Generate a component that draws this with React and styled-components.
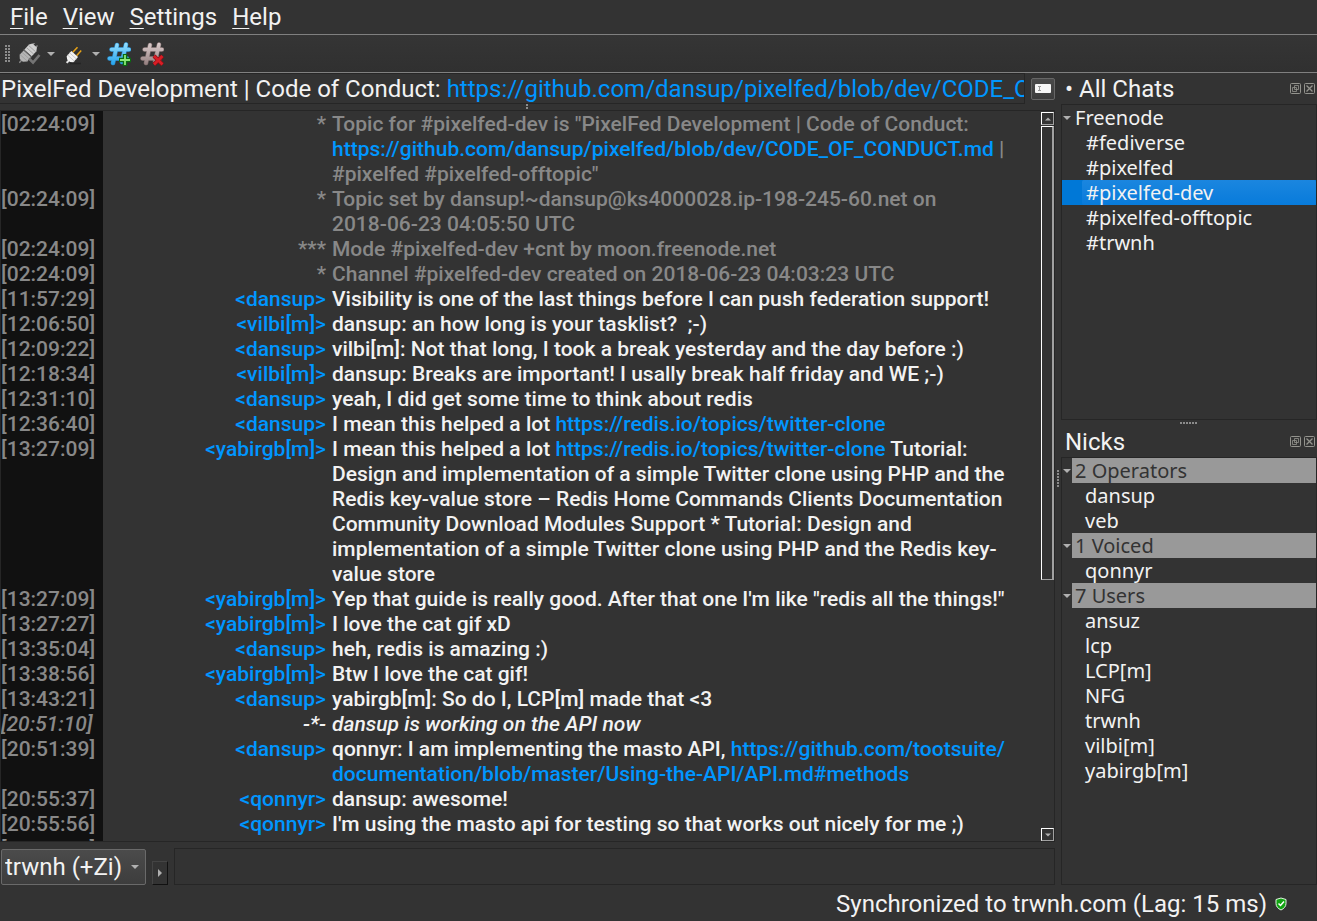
import React from "react";
import styled, { createGlobalStyle, css } from "styled-components";

const color = {
  window: "#333333",
  frame: "#262626",
  text: "#f2f2f2",
  muted: "#888888",
  link: "#0096ff",
  gutter: "#111111",
};

const GlobalStyle = createGlobalStyle`
  * { box-sizing: border-box; }
  html, body { margin: 0; padding: 0; }
  body {
    background: ${color.window};
    color: ${color.text};
    font-family: Roboto, "Liberation Sans", sans-serif;
    font-size: 24px;
    line-height: 30px;
  }
  button, input, select { font: inherit; color: inherit; margin: 0; }
`;

const Window = styled.div`
  display: flex;
  flex-direction: column;
  height: 100vh;
  overflow: hidden;
`;

const MenuBar = styled.nav`
  display: flex;
  gap: 15px;
  height: 35px;
  padding: 2px 10px 0;
  border-bottom: 1px solid #808080;
  flex: none;
`;

const MenuButton = styled.button`
  background: none;
  border: 0;
  padding: 0;
  height: 30px;
  u {
    text-decoration-thickness: 1px;
    text-underline-offset: 3px;
  }
`;

const Toolbar = styled.div`
  display: flex;
  align-items: center;
  height: 38px;
  padding-left: 5px;
  border-bottom: 1px solid #808080;
  background: linear-gradient(#353535, #303030);
  flex: none;
`;

const ToolButton = styled.button`
  display: flex;
  align-items: center;
  background: none;
  border: 0;
  padding: 0;
  margin-left: ${(p) => p.$before}px;
`;

const Main = styled.main`
  display: flex;
  flex: 1;
  min-height: 0;
`;

const ChatColumn = styled.section`
  display: flex;
  flex-direction: column;
  flex: 1;
  min-width: 0;
`;

const TopicRow = styled.div`
  display: flex;
  align-items: center;
  gap: 6px;
  height: 31px;
  flex: none;
`;

const Topic = styled.div`
  flex: 1;
  min-width: 0;
  height: 31px;
  padding: 1px 0 0 1px;
  overflow: hidden;
  white-space: nowrap;
  border: 1px solid ${color.frame};
  border-left: 0;
  line-height: 29px;
`;

const EditButton = styled.button`
  display: flex;
  align-items: center;
  justify-content: center;
  width: 24px;
  height: 22px;
  padding: 0;
  border: 1px solid #666;
  border-radius: 2px;
  background: linear-gradient(#4a4a4a, #3c3c3c);
`;

const Handle = styled.div`
  display: flex;
  align-items: center;
  justify-content: center;
  flex: none;
  ${(p) => (p.$vertical ? "width: 6px;" : "height: 6px;")}
`;

const Link = styled.a`
  color: ${color.link};
  text-decoration: none;
`;

const NoBreak = styled.span`
  white-space: nowrap;
`;

const ChatFrame = styled.div`
  display: flex;
  flex: 1;
  min-height: 0;
  border: 1px solid ${color.frame};
`;

const Log = styled.div`
  flex: 1;
  min-width: 0;
  padding-top: 1px;
  overflow: hidden;
  background: linear-gradient(to right, ${color.gutter} 102px, transparent 102px);
  font-size: 21px;
  font-weight: 500;
  line-height: 25px;
`;

const Line = styled.div`
  display: grid;
  grid-template-columns: 102px 223px minmax(0, 1fr);
  ${(p) => p.$kind === "info" && css`color: ${color.muted};`}
  ${(p) => p.$kind === "action" && css`font-style: italic;`}
`;

const Time = styled.time`
  color: ${color.muted};
`;

const Sender = styled.span`
  text-align: right;
  color: ${(p) => (p.$nick ? color.link : "inherit")};
`;

const Message = styled.span`
  padding: 0 17px 0 6px;
`;

const Scrollbar = styled.div`
  display: flex;
  flex-direction: column;
  width: 13px;
  flex: none;
  padding-top: 1px;
`;

const raised = css`
  border: 1px solid;
  border-color: #ffffff #a0a0a0 #a0a0a0 #ffffff;
`;

const ScrollButton = styled.button`
  ${raised}
  display: flex;
  align-items: center;
  justify-content: center;
  width: 13px;
  height: 13px;
  padding: 0;
  background: ${color.window};
  flex: none;
`;

const ScrollTrack = styled.div`
  display: flex;
  flex-direction: column;
  flex: 1;
  padding-top: 1px;
`;

const ScrollThumb = styled.div`
  ${raised}
  border-right-width: 2px;
  width: 13px;
  flex: 129 1 0;
`;

const ScrollRest = styled.div`
  flex: 71 1 0;
`;

const InputRow = styled.form`
  display: flex;
  align-items: flex-end;
  gap: 6px;
  height: 37px;
  margin-top: 6px;
  flex: none;
`;

const SelectBox = styled.label`
  display: grid;
  align-items: center;
  width: 146px;
  height: 36px;
  padding-left: 1px;
  > * { grid-area: 1 / 1; }
  > svg {
    justify-self: end;
    margin-right: 7px;
    pointer-events: none;
  }
`;

const NickSelect = styled.select`
  appearance: none;
  width: 100%;
  height: 36px;
  padding: 0 0 0 3px;
  border: 1px solid #6a6a6a;
  border-radius: 2px;
  background: linear-gradient(#4b4b4b, #3d3d3d);
`;

const StyleButton = styled.button`
  display: flex;
  align-items: center;
  justify-content: center;
  width: 16px;
  height: 24px;
  padding: 0;
  border: 1px solid;
  border-color: #444 #111 #111 #444;
  background: ${color.window};
`;

const MessageInput = styled.input`
  flex: 1;
  min-width: 0;
  height: 37px;
  padding: 0 4px;
  border: 1px solid ${color.frame};
  background: ${color.window};
  outline: 0;
`;

const Sidebar = styled.aside`
  display: flex;
  flex-direction: column;
  width: 256px;
  flex: none;
`;

const Dock = styled.section`
  display: flex;
  flex-direction: column;
  min-height: 0;
  flex: ${(p) => p.$grow} 1 0;
`;

const DockTitle = styled.header`
  display: flex;
  align-items: center;
  gap: 3px;
  height: 31px;
  padding: 0 2px 0 4px;
  flex: none;
`;

const Title = styled.h2`
  flex: 1;
  margin: 0;
  font-size: 24px;
  font-weight: 400;
`;

const DockButton = styled.button`
  display: flex;
  width: 11px;
  height: 11px;
  padding: 0;
  border: 0;
  background: none;
`;

const Tree = styled.ul`
  flex: 1;
  min-height: 0;
  margin: 0;
  padding: 0;
  list-style: none;
  overflow: hidden;
  border: 1px solid ${color.frame};
  font-family: "Noto Sans", "Open Sans", sans-serif;
  font-size: 20px;
  line-height: 26px;
`;

const Group = styled.li`
  display: flex;
  align-items: center;
  gap: 1px;
  height: 25px;
  padding-left: 1px;
`;

const GroupLabel = styled.span`
  flex: 1;
  height: 25px;
  padding-left: 3px;
  ${(p) => p.$filled && css`
    background: #999999;
    color: ${color.window};
  `}
`;

const Item = styled.li`
  height: 25px;
  padding-left: 20px;
  background: ${(p) => (p.$selected ? "#0078d7" : "transparent")};
`;

const ItemLabel = styled.span`
  display: block;
  height: 25px;
  padding-left: ${(p) => p.$inset}px;
  border-radius: 2px;
  background: ${(p) => (p.$selected ? "linear-gradient(#1b86df, #087bdb)" : "none")};
`;

const StatusBar = styled.footer`
  display: flex;
  align-items: center;
  justify-content: flex-end;
  gap: 8px;
  height: 36px;
  padding: 2px 30px 0 0;
  flex: none;
`;

const Arrow = ({ dir = "down", size = 8 }) => {
  const d = { down: "M0 2h8L4 6z", up: "M0 6h8L4 2z", right: "M2 0v8L6 4z" }[dir];
  return (
    <svg width={size} height={size} viewBox="0 0 8 8" aria-hidden="true">
      <path d={d} fill="#b0b0b0" />
    </svg>
  );
};

const Dots = ({ cols, rows, step = 3 }) => (
  <svg width={cols * step} height={rows * step} aria-hidden="true">
    {Array.from({ length: cols * rows }, (_, i) => (
      <rect key={i} x={(i % cols) * step} y={Math.floor(i / cols) * step} width="2" height="2" fill="#8c8c8c" />
    ))}
  </svg>
);

const DisconnectedIcon = () => (
  <svg width="22" height="22" viewBox="0 0 22 22" aria-hidden="true">
    <g transform="translate(9 10) rotate(-48)">
      <path d="M-13 0h4M9-2h4M9 2h3" stroke="#8a8a8a" strokeWidth="1.4" />
      <path d="M-10-2l3-3h6v10h-6l-3-3z" fill="#b5b5b5" />
      <path d="M0-5h7l3 2v6l-3 2H0z" fill="#d0d0d0" />
      <path d="M-6.500-5v10M-3.500-5v10M3-5v10M6-5v10" stroke="#9c9c9c" strokeWidth=".8" />
      <path d="M-.5-5.500v11" stroke="#6b6b6b" />
    </g>
    <path d="M10 15.500l4 4 6.500-7.500" stroke="#747474" strokeWidth="2.600" fill="none" />
  </svg>
);

const PlugIcon = () => (
  <svg width="18" height="22" viewBox="0 0 18 22" aria-hidden="true">
    <path d="M5 20.500h11" stroke="#252525" strokeWidth="1.500" />
    <g transform="translate(7 14) rotate(-48)">
      <path d="M4-2.500h7M4 2.500h7" stroke="#e8a317" strokeWidth="1.500" />
      <path d="M-8 0h4" stroke="#e2e2e2" strokeWidth="2" />
      <path d="M-5-2l2-2.500h7v9h-7L-5 2z" fill="#f4f4f4" />
      <path d="M-1.500-4.500v9M1.500-4.500v9" stroke="#c4c4c4" strokeWidth=".8" />
    </g>
  </svg>
);

const hashPath = "M10 3L6 21M19 2.500l-4 17.500M4.500 7.500h17.500M2.500 16.500h17.500";

const HashIcon = ({ id, from, to, edge, children }) => (
  <svg width="24" height="24" viewBox="0 0 24 24" aria-hidden="true">
    <defs>
      <linearGradient id={id} x1="0" y1="0" x2="0" y2="24" gradientUnits="userSpaceOnUse">
        <stop offset="0" stopColor={from} />
        <stop offset="1" stopColor={to} />
      </linearGradient>
    </defs>
    <path d={hashPath} stroke={edge} strokeWidth="4.600" strokeLinecap="round" fill="none" />
    <path d={hashPath} stroke={`url(#${id})`} strokeWidth="3.400" strokeLinecap="round" fill="none" />
    {children}
  </svg>
);

const JoinIcon = () => (
  <HashIcon id="join" from="#9be2ff" to="#1d9feb" edge="#2a8fd0">
    <path d="M18 12v12M12 18h12" stroke="#0a6a10" strokeWidth="4.400" />
    <path d="M18 13v10M13 18h10" stroke="#8be878" strokeWidth="1.800" />
  </HashIcon>
);

const PartIcon = () => (
  <HashIcon id="part" from="#e0d2d2" to="#8f7a7a" edge="#7c6a6a">
    <path d="M14 14l8.500 8.500M22.500 14L14 22.500" stroke="#8f0b10" strokeWidth="4" />
    <path d="M14 14l8.500 8.500M22.500 14L14 22.500" stroke="#d81e26" strokeWidth="2.600" />
  </HashIcon>
);

const EditIcon = () => (
  <svg width="16" height="10" viewBox="0 0 16 10" aria-hidden="true">
    <rect x="0" y="0" width="16" height="9" rx="1" fill="#f6f6f6" />
    <path d="M3 2.5h3M3 6.5h3M4.5 2.5v4" stroke="#999" fill="none" />
  </svg>
);

const FloatIcon = () => (
  <svg width="11" height="11" viewBox="0 0 11 11" fill="none" stroke="#94948e" aria-hidden="true">
    <rect x=".5" y=".5" width="10" height="10" rx="1" />
    <path d="M4.500 2.500h4v4h-4zM2.500 4.500h4v4h-4z" strokeWidth=".8" />
  </svg>
);

const CloseIcon = () => (
  <svg width="11" height="11" viewBox="0 0 11 11" fill="none" stroke="#94948e" aria-hidden="true">
    <rect x=".5" y=".5" width="10" height="10" rx="1" />
    <path d="M2.500 2.500l6 6M8.500 2.500l-6 6" strokeWidth="1.300" />
  </svg>
);

const ShieldIcon = () => (
  <svg width="12" height="14" viewBox="0 0 12 14" aria-hidden="true">
    <path d="M6 1l5 1.500v4c0 3-2 5-5 6.500-3-1.500-5-3.500-5-6.500v-4z" fill="#12a312" stroke="#dff5df" />
    <path d="M3.500 6.500l2 2 3.500-4" stroke="#fff" strokeWidth="1.500" fill="none" />
  </svg>
);

const log = [
  ["02:24:09", "*", <>Topic for #pixelfed-dev is "PixelFed Development | Code of Conduct: <Link href="#coc">https://github.com/dansup/pixelfed/blob/dev/CODE_OF_CONDUCT.md</Link> | #pixelfed #pixelfed-offtopic"</>, "info"],
  ["02:24:09", "*", <>Topic set by dansup!~dansup@ks4000028.ip-198-245-60.net on <NoBreak>2018-06-23</NoBreak> 04:05:50 UTC</>, "info"],
  ["02:24:09", "***", "Mode #pixelfed-dev +cnt by moon.freenode.net", "info"],
  ["02:24:09", "*", "Channel #pixelfed-dev created on 2018-06-23 04:03:23 UTC", "info"],
  ["11:57:29", "dansup", "Visibility is one of the last things before I can push federation support!"],
  ["12:06:50", "vilbi[m]", <>dansup: an how long is your tasklist?&nbsp; ;-)</>],
  ["12:09:22", "dansup", "vilbi[m]: Not that long, I took a break yesterday and the day before :)"],
  ["12:18:34", "vilbi[m]", "dansup: Breaks are important! I usally break half friday and WE ;-)"],
  ["12:31:10", "dansup", "yeah, I did get some time to think about redis"],
  ["12:36:40", "dansup", <>I mean this helped a lot <Link href="#redis">https://redis.io/topics/twitter-clone</Link></>],
  ["13:27:09", "yabirgb[m]", <>I mean this helped a lot <Link href="#redis">https://redis.io/topics/twitter-clone</Link> Tutorial: Design and implementation of a simple Twitter clone using PHP and the Redis key-value store – Redis Home Commands Clients Documentation Community Download Modules Support * Tutorial: Design and implementation of a simple Twitter clone using PHP and the Redis key-value store</>],
  ["13:27:09", "yabirgb[m]", "Yep that guide is really good. After that one I'm like \"redis all the things!\""],
  ["13:27:27", "yabirgb[m]", "I love the cat gif xD"],
  ["13:35:04", "dansup", "heh, redis is amazing :)"],
  ["13:38:56", "yabirgb[m]", "Btw I love the cat gif!"],
  ["13:43:21", "dansup", "yabirgb[m]: So do I, LCP[m] made that <3"],
  ["20:51:10", "-*-", "dansup is working on the API now", "action"],
  ["20:51:39", "dansup", <>qonnyr: I am implementing the masto API, <Link href="#api"><NoBreak>https://github.com/tootsuite/</NoBreak><wbr /><NoBreak>documentation/blob/master/Using-the-API/API.md#methods</NoBreak></Link></>],
  ["20:55:37", "qonnyr", "dansup: awesome!"],
  ["20:55:56", "qonnyr", "I'm using the masto api for testing so that works out nicely for me ;)"],
  ["20:56:29", "dansup", <>yea, he's got done so i'll follow the same for you, some will be on <Link href="#next">this</Link></>],
];

const channels = ["#fediverse", "#pixelfed", "#pixelfed-dev", "#pixelfed-offtopic", "#trwnh"];

const nickGroups = [
  ["2 Operators", ["dansup", "veb"]],
  ["1 Voiced", ["qonnyr"]],
  ["7 Users", ["ansuz", "lcp", "LCP[m]", "NFG", "trwnh", "vilbi[m]", "yabirgb[m]"]],
];

const LogLine = ({ time, sender, kind, children }) => (
  <Line $kind={kind}>
    <Time>[{time}]</Time>
    <Sender $nick={!kind}>{kind ? sender : `<${sender}>`}</Sender>
    <Message>{children}</Message>
  </Line>
);

const DockHeader = ({ title }) => (
  <DockTitle>
    <Title>{title}</Title>
    <DockButton aria-label={`Float ${title}`}><FloatIcon /></DockButton>
    <DockButton aria-label={`Close ${title}`}><CloseIcon /></DockButton>
  </DockTitle>
);

export default function App() {
  return (
    <Window>
      <GlobalStyle />
      <MenuBar>
        {["File", "View", "Settings", "Help"].map((m) => (
          <MenuButton key={m}><u>{m[0]}</u>{m.slice(1)}</MenuButton>
        ))}
      </MenuBar>
      <Toolbar>
        <Dots cols={2} rows={6} />
        <ToolButton $before={8} aria-label="Disconnect"><DisconnectedIcon /></ToolButton>
        <ToolButton $before={6} aria-label="Disconnect options"><Arrow /></ToolButton>
        <ToolButton $before={10} aria-label="Connect"><PlugIcon /></ToolButton>
        <ToolButton $before={9} aria-label="Connect options"><Arrow /></ToolButton>
        <ToolButton $before={7} aria-label="Join channel"><JoinIcon /></ToolButton>
        <ToolButton $before={9} aria-label="Part channel"><PartIcon /></ToolButton>
      </Toolbar>
      <Main>
        <ChatColumn>
          <TopicRow>
            <Topic>
              PixelFed Development | Code of Conduct:{" "}
              <Link href="#coc">https://github.com/dansup/pixelfed/blob/dev/CODE_OF_CONDUCT.md</Link>
            </Topic>
            <EditButton aria-label="Edit topic"><EditIcon /></EditButton>
          </TopicRow>
          <Handle><Dots cols={1} rows={2} /></Handle>
          <ChatFrame>
            <Log>
              {log.map(([time, sender, text, kind], i) => (
                <LogLine key={i} time={time} sender={sender} kind={kind}>{text}</LogLine>
              ))}
            </Log>
            <Scrollbar>
              <ScrollButton aria-label="Scroll up"><Arrow dir="up" size={6} /></ScrollButton>
              <ScrollTrack><ScrollThumb /><ScrollRest /></ScrollTrack>
              <ScrollButton aria-label="Scroll down"><Arrow size={6} /></ScrollButton>
            </Scrollbar>
          </ChatFrame>
          <InputRow>
            <SelectBox>
              <NickSelect aria-label="Nick"><option>trwnh (+Zi)</option></NickSelect>
              <Arrow />
            </SelectBox>
            <StyleButton type="button" aria-label="Text style"><Arrow dir="right" /></StyleButton>
            <MessageInput aria-label="Message" />
          </InputRow>
        </ChatColumn>
        <Handle $vertical><Dots cols={1} rows={6} /></Handle>
        <Sidebar>
          <Dock $grow={347}>
            <DockHeader title="• All Chats" />
            <Tree>
              <Group><Arrow /><GroupLabel>Freenode</GroupLabel></Group>
              {channels.map((c) => (
                <Item key={c} $selected={c === "#pixelfed-dev"}>
                  <ItemLabel $inset={4} $selected={c === "#pixelfed-dev"}>{c}</ItemLabel>
                </Item>
              ))}
            </Tree>
          </Dock>
          <Handle><Dots cols={6} rows={1} /></Handle>
          <Dock $grow={459}>
            <DockHeader title="Nicks" />
            <Tree>
              {nickGroups.map(([label, nicks]) => (
                <React.Fragment key={label}>
                  <Group><Arrow /><GroupLabel $filled>{label}</GroupLabel></Group>
                  {nicks.map((n) => (
                    <Item key={n}><ItemLabel $inset={3}>{n}</ItemLabel></Item>
                  ))}
                </React.Fragment>
              ))}
            </Tree>
          </Dock>
        </Sidebar>
      </Main>
      <StatusBar>
        <span>Synchronized to trwnh.com (Lag: 15 ms)</span>
        <ShieldIcon />
      </StatusBar>
    </Window>
  );
}
